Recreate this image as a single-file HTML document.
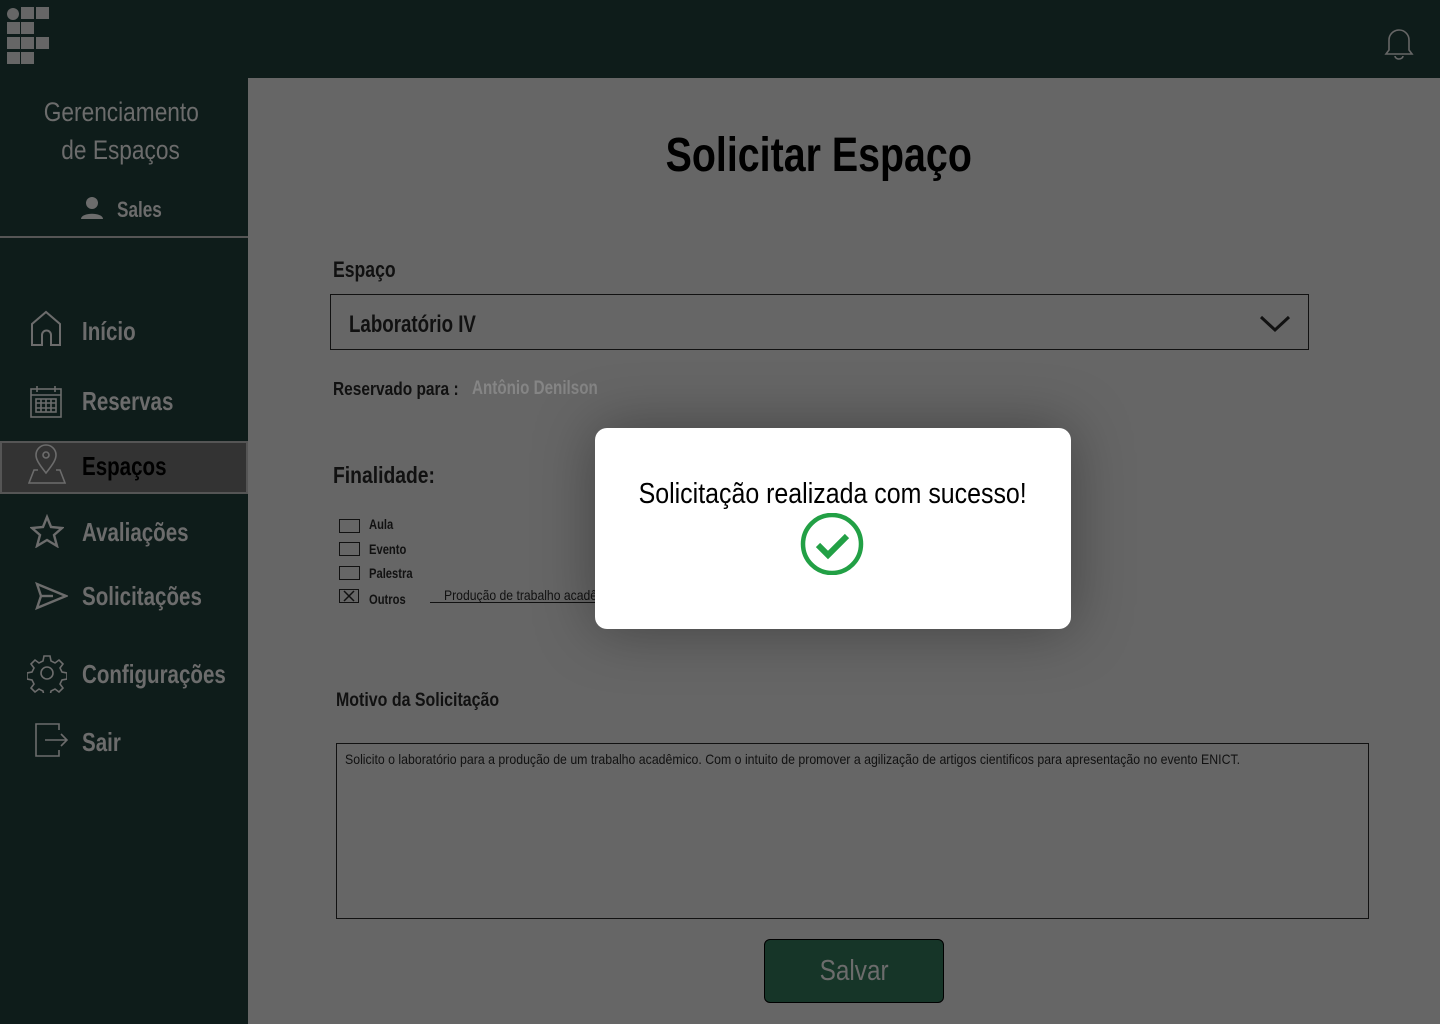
<!DOCTYPE html><html><head><meta charset="utf-8"><style>
*{margin:0;padding:0;box-sizing:border-box}
body{width:1440px;height:1024px;position:relative;overflow:hidden;background:#666;font-family:"Liberation Sans",sans-serif;}
.c{display:inline-block;transform:scaleX(.84);transform-origin:left center;white-space:nowrap}
.cc{display:inline-block;transform:scaleX(.84);transform-origin:center;white-space:nowrap}
#top{position:absolute;left:0;top:0;width:1440px;height:78px;background:#0e1c1a}
#side{position:absolute;left:0;top:78px;width:248px;height:946px;background:#0e1c1a}
.abs{position:absolute}
.nav{position:absolute;left:82px;font-size:26px;color:#6c6c6c;font-weight:bold}
.nav .c{transform:scaleX(.79)}
.cb{position:absolute;left:339px;width:21px;height:14px;border:1px solid #111}
.lbl{position:absolute;left:369px;font-size:14px;color:#111;font-weight:bold}
.lbl .c{transform:scaleX(.8)}
</style></head><body>
<div id="top">
<svg class="abs" style="left:6px;top:6px" width="46" height="60"><circle cx="7" cy="8" r="6" fill="#666"/><g fill="#666"><rect x="15" y="1" width="13" height="12"/><rect x="30" y="1" width="13" height="12"/><rect x="1" y="16" width="13" height="12"/><rect x="15" y="16" width="13" height="12"/><rect x="1" y="31" width="13" height="12"/><rect x="15" y="31" width="13" height="12"/><rect x="30" y="31" width="13" height="12"/><rect x="1" y="46" width="13" height="12"/><rect x="15" y="46" width="13" height="12"/></g></svg>
<svg class="abs" style="left:1382px;top:26px" width="34" height="34" fill="none" stroke="#666" stroke-width="1.6"><path d="M4 28h26l-3-4V14a10 10 0 0 0-20 0v10z"/><path d="M13 30a4 3 0 0 0 8 0"/></svg>
</div>
<div id="side">
<div class="abs" style="left:-3px;top:15px;width:248px;text-align:center;font-size:27px;line-height:38px;color:#6c6c6c"><span class="cc">Gerenciamento</span><br><span class="cc">de Espaços</span></div>
<svg class="abs" style="left:80px;top:118px" width="24" height="24" fill="#6c6c6c"><circle cx="12" cy="7" r="6"/><path d="M1 23c0-7 22-7 22 0z"/></svg>
<div class="abs" style="left:117px;top:119px;font-size:22px;color:#6c6c6c;font-weight:bold"><span class="c" style="transform:scaleX(.78)">Sales</span></div>
<div class="abs" style="left:0;top:158px;width:248px;height:2px;background:#555"></div>
<div class="abs" style="left:0;top:363px;width:248px;height:53px;background:#333;border:2px solid #555"></div>
<div class="nav" style="top:238px"><span class="c">Início</span></div>
<div class="nav" style="top:308px"><span class="c">Reservas</span></div>
<div class="nav" style="top:373px;color:#000"><span class="c">Espaços</span></div>
<div class="nav" style="top:439px"><span class="c">Avaliações</span></div>
<div class="nav" style="top:503px"><span class="c">Solicitações</span></div>
<div class="nav" style="top:581px"><span class="c">Configurações</span></div>
<div class="nav" style="top:649px"><span class="c">Sair</span></div>
<svg class="abs" style="left:28px;top:230px" width="40" height="40" fill="none" stroke="#6c6c6c" stroke-width="2"><path d="M4 37V16L18 4l14 12v21h-9V27a4 4 0 0 0-9 0v10z"/></svg>
<svg class="abs" style="left:28px;top:305px" width="36" height="36" fill="none" stroke="#6c6c6c" stroke-width="1.6"><rect x="3" y="6" width="30" height="28"/><path d="M3 12h30M9 3v6M27 3v6"/><rect x="8" y="16" width="20" height="13"/><path d="M13 16v13M18 16v13M23 16v13M8 20h20M8 25h20"/></svg>
<svg class="abs" style="left:28px;top:365px" width="40" height="42" fill="none" stroke="#6c6c6c" stroke-width="1.6"><path d="M18 30C10 20 8 16 8 12a10 10 0 0 1 20 0c0 4-2 8-10 18z"/><circle cx="18" cy="12" r="3"/><path d="M10 27H6L1 40h36l-5-13h-4"/></svg>
<svg class="abs" style="left:30px;top:436px" width="34" height="34" fill="none" stroke="#6c6c6c" stroke-width="2.4"><path d="M17 3l4 10 11 1-8 7 3 11-10-6-10 6 3-11-8-7 11-1z"/></svg>
<svg class="abs" style="left:34px;top:503px" width="34" height="30" fill="none" stroke="#6c6c6c" stroke-width="2.4"><path d="M3 3l29 12L3 27l4-12z"/><path d="M7 15h12"/></svg>
<svg class="abs" style="left:27px;top:575px" width="40" height="40" fill="none" stroke="#6c6c6c" stroke-width="1.6"><path d="M17 3h6l1 5 4 2 4-3 4 4-3 4 2 4 5 1v6l-5 1-2 4 3 4-4 4-4-3-4 2-1 5h-6l-1-5-4-2-4 3-4-4 3-4-2-4-5-1v-6l5-1 2-4-3-4 4-4 4 3 4-2z"/><circle cx="20" cy="20" r="6"/></svg>
<svg class="abs" style="left:34px;top:644px" width="34" height="36" fill="none" stroke="#6c6c6c" stroke-width="1.6"><path d="M25 8V2H2v32h23v-6"/><path d="M11 18h21M27 12l6 6-6 6"/></svg>
</div>

<div class="abs" style="left:248px;top:128px;width:1142px;text-align:center;font-size:48px;font-weight:bold;color:#000"><span class="cc" style="transform:scaleX(.82)">Solicitar Espaço</span></div>
<div class="abs" style="left:333px;top:257px;font-size:22px;color:#111;font-weight:bold"><span class="c" style="transform:scaleX(.8)">Espaço</span></div>
<div class="abs" style="left:330px;top:294px;width:979px;height:56px;border:1px solid #111"></div>
<div class="abs" style="left:349px;top:311px;font-size:24px;color:#111;font-weight:bold"><span class="c" style="transform:scaleX(.78)">Laboratório IV</span></div>
<svg class="abs" style="left:1259px;top:313px" width="32" height="20" fill="none" stroke="#111" stroke-width="3"><path d="M2 4l14 13L30 4"/></svg>
<div class="abs" style="left:333px;top:379px;font-size:18px;color:#111;font-weight:bold"><span class="c" style="transform:scaleX(.86)">Reservado para :</span></div>
<div class="abs" style="left:472px;top:378px;font-size:19px;color:#858585;font-weight:bold"><span class="c" style="transform:scaleX(.8)">Antônio Denilson</span></div>
<div class="abs" style="left:333px;top:462px;font-size:23px;font-weight:bold;color:#111"><span class="c">Finalidade:</span></div>
<div class="cb" style="top:519px"></div><div class="lbl" style="top:516px"><span class="c">Aula</span></div>
<div class="cb" style="top:542px"></div><div class="lbl" style="top:541px"><span class="c">Evento</span></div>
<div class="cb" style="top:566px"></div><div class="lbl" style="top:565px"><span class="c">Palestra</span></div>
<div class="cb" style="top:589px;width:20px;height:14px"><svg width="18" height="12" stroke="#111" stroke-width="1.5" style="position:absolute;left:0;top:0"><path d="M4 1l10 10M14 1L4 11"/></svg></div>
<div class="lbl" style="top:591px"><span class="c">Outros</span></div>
<div class="abs" style="left:430px;top:602px;width:170px;height:1px;background:#111"></div>
<div class="abs" style="left:444px;top:587px;font-size:14px;color:#111"><span class="c" style="transform:scaleX(.87)">Produção de trabalho acadê</span></div>
<div class="abs" style="left:336px;top:690px;font-size:19px;font-weight:bold;color:#111"><span class="c">Motivo da Solicitação</span></div>
<div class="abs" style="left:336px;top:743px;width:1033px;height:176px;border:1px solid #111"></div>
<div class="abs" style="left:345px;top:751px;font-size:14px;color:#111"><span class="c" style="transform:scaleX(.88)">Solicito o laboratório para a produção de um trabalho acadêmico. Com o intuito de promover a agilização de artigos cientificos para apresentação no evento ENICT.</span></div>
<div class="abs" style="left:764px;top:939px;width:180px;height:64px;background:#163528;border:1px solid #000;border-radius:6px;text-align:center;line-height:62px;font-size:29px;color:#6c6c6c"><span class="cc">Salvar</span></div>

<div class="abs" style="left:595px;top:428px;width:476px;height:201px;background:#fff;border-radius:12px;box-shadow:0 0 60px rgba(0,0,0,.35)">
<div style="position:absolute;top:50px;width:100%;text-align:center;font-size:29px;color:#000"><span class="cc" style="transform:scaleX(.86)">Solicitação realizada com sucesso!</span></div>
<svg class="abs" style="left:204px;top:85px" width="66" height="62" fill="none" stroke="#22a045" stroke-width="4.5"><circle cx="33" cy="31" r="29"/><path d="M19 32l10 10 19-19" stroke-width="6"/></svg>
</div>
</body></html>
